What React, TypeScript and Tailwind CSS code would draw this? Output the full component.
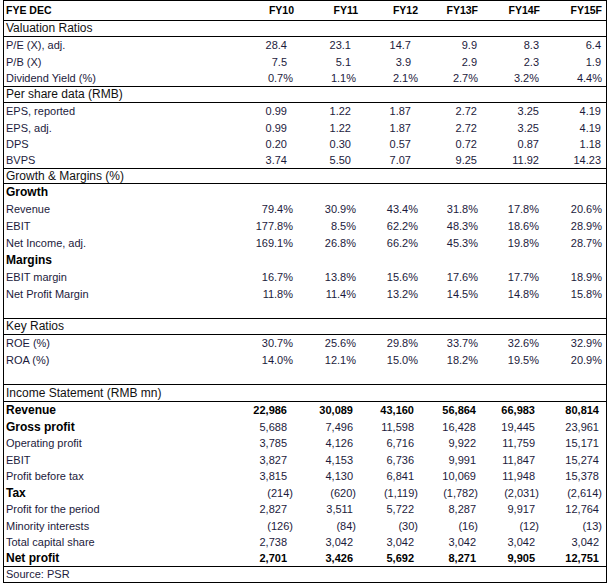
type Kind = 'head' | 'section' | 'sub' | 'row' | 'blank' | 'source';
type Fmt = 'dec' | 'pct' | 'num';

type Row = {
  label: string;
  kind: Kind;
  h: string;
  line?: boolean;
  vals?: string[];
  fmt?: Fmt;
  boldLabel?: boolean;
  boldVals?: boolean;
};

const years = ['FY10', 'FY11', 'FY12', 'FY13F', 'FY14F', 'FY15F'];

// right padding per column so numbers line up like the excel accounting format
const padDec = ['pr-[7px]', 'pr-[7px]', 'pr-[7px]', 'pr-[1px]', 'pr-[1px]', 'pr-[1px]'];
const padPct = ['pr-[1px]', 'pr-[2px]', 'pr-0', 'pr-0', 'pr-[1px]', 'pr-0'];
const padNum = ['pr-[7px]', 'pr-[5px]', 'pr-[4px]', 'pr-[2px]', 'pr-[5px]', 'pr-[3px]'];

const rows: Row[] = [
  { label: 'FYE DEC', kind: 'head', h: 'h-[20px]', line: true },
  { label: 'Valuation Ratios', kind: 'section', h: 'h-[16px]', line: true },
  { label: 'P/E (X), adj.', kind: 'row', h: 'h-[17px]', fmt: 'dec', vals: ['28.4', '23.1', '14.7', '9.9', '8.3', '6.4'] },
  { label: 'P/B (X)', kind: 'row', h: 'h-[17px]', fmt: 'dec', vals: ['7.5', '5.1', '3.9', '2.9', '2.3', '1.9'] },
  { label: 'Dividend Yield (%)', kind: 'row', h: 'h-[16px]', line: true, fmt: 'pct', vals: ['0.7%', '1.1%', '2.1%', '2.7%', '3.2%', '4.4%'] },
  { label: 'Per share data (RMB)', kind: 'section', h: 'h-[16px]', line: true },
  { label: 'EPS, reported', kind: 'row', h: 'h-[17px]', fmt: 'dec', vals: ['0.99', '1.22', '1.87', '2.72', '3.25', '4.19'] },
  { label: 'EPS, adj.', kind: 'row', h: 'h-[16px]', fmt: 'dec', vals: ['0.99', '1.22', '1.87', '2.72', '3.25', '4.19'] },
  { label: 'DPS', kind: 'row', h: 'h-[17px]', fmt: 'dec', vals: ['0.20', '0.30', '0.57', '0.72', '0.87', '1.18'] },
  { label: 'BVPS', kind: 'row', h: 'h-[16px]', line: true, fmt: 'dec', vals: ['3.74', '5.50', '7.07', '9.25', '11.92', '14.23'] },
  { label: 'Growth & Margins (%)', kind: 'section', h: 'h-[15px]', line: true },
  { label: 'Growth', kind: 'sub', h: 'h-[17px]' },
  { label: 'Revenue', kind: 'row', h: 'h-[17px]', fmt: 'pct', vals: ['79.4%', '30.9%', '43.4%', '31.8%', '17.8%', '20.6%'] },
  { label: 'EBIT', kind: 'row', h: 'h-[17px]', fmt: 'pct', vals: ['177.8%', '8.5%', '62.2%', '48.3%', '18.6%', '28.9%'] },
  { label: 'Net Income, adj.', kind: 'row', h: 'h-[17px]', fmt: 'pct', vals: ['169.1%', '26.8%', '66.2%', '45.3%', '19.8%', '28.7%'] },
  { label: 'Margins', kind: 'sub', h: 'h-[17px]' },
  { label: 'EBIT margin', kind: 'row', h: 'h-[17px]', fmt: 'pct', vals: ['16.7%', '13.8%', '15.6%', '17.6%', '17.7%', '18.9%'] },
  { label: 'Net Profit Margin', kind: 'row', h: 'h-[17px]', fmt: 'pct', vals: ['11.8%', '11.4%', '13.2%', '14.5%', '14.8%', '15.8%'] },
  { label: '', kind: 'blank', h: 'h-[16px]', line: true },
  { label: 'Key Ratios', kind: 'section', h: 'h-[16px]', line: true },
  { label: 'ROE (%)', kind: 'row', h: 'h-[17px]', fmt: 'pct', vals: ['30.7%', '25.6%', '29.8%', '33.7%', '32.6%', '32.9%'] },
  { label: 'ROA (%)', kind: 'row', h: 'h-[17px]', fmt: 'pct', vals: ['14.0%', '12.1%', '15.0%', '18.2%', '19.5%', '20.9%'] },
  { label: '', kind: 'blank', h: 'h-[16px]', line: true },
  { label: 'Income Statement (RMB mn)', kind: 'section', h: 'h-[17px]', line: true },
  { label: 'Revenue', kind: 'row', h: 'h-[17px]', fmt: 'num', boldLabel: true, boldVals: true, vals: ['22,986', '30,089', '43,160', '56,864', '66,983', '80,814'] },
  { label: 'Gross profit', kind: 'row', h: 'h-[16px]', fmt: 'num', boldLabel: true, vals: ['5,688', '7,496', '11,598', '16,428', '19,445', '23,961'] },
  { label: 'Operating profit', kind: 'row', h: 'h-[17px]', fmt: 'num', vals: ['3,785', '4,126', '6,716', '9,922', '11,759', '15,171'] },
  { label: 'EBIT', kind: 'row', h: 'h-[16px]', fmt: 'num', vals: ['3,827', '4,153', '6,736', '9,991', '11,847', '15,274'] },
  { label: 'Profit before tax', kind: 'row', h: 'h-[17px]', fmt: 'num', vals: ['3,815', '4,130', '6,841', '10,069', '11,948', '15,378'] },
  { label: 'Tax', kind: 'row', h: 'h-[16px]', fmt: 'num', boldLabel: true, vals: ['(214)', '(620)', '(1,119)', '(1,782)', '(2,031)', '(2,614)'] },
  { label: 'Profit for the period', kind: 'row', h: 'h-[17px]', fmt: 'num', vals: ['2,827', '3,511', '5,722', '8,287', '9,917', '12,764'] },
  { label: 'Minority interests', kind: 'row', h: 'h-[16px]', fmt: 'num', vals: ['(126)', '(84)', '(30)', '(16)', '(12)', '(13)'] },
  { label: 'Total capital share', kind: 'row', h: 'h-[17px]', fmt: 'num', vals: ['2,738', '3,042', '3,042', '3,042', '3,042', '3,042'] },
  { label: 'Net profit', kind: 'row', h: 'h-[16px]', line: true, fmt: 'num', boldLabel: true, boldVals: true, vals: ['2,701', '3,426', '5,692', '8,271', '9,905', '12,751'] },
  { label: 'Source: PSR', kind: 'source', h: 'h-[15px]' },
];

const grid = 'grid grid-cols-[226px_64px_64px_60px_60px_62px_62px] pr-[4px]';

function padFor(fmt: Fmt | undefined, v: string, i: number) {
  if (fmt === 'pct' || v.startsWith('(')) return padPct[i];
  if (fmt === 'dec') return padDec[i];
  return padNum[i];
}

function labelClass(r: Row) {
  if (r.kind === 'head') return 'text-[10.5px] font-bold text-black';
  if (r.kind === 'section') return 'text-[12px] text-[#111]';
  if (r.kind === 'sub') return 'text-[12px] font-bold text-black';
  if (r.boldLabel) return 'text-[12px] font-bold text-black';
  return 'text-[11px] text-[#1c1a3c]';
}

export default function App() {
  return (
    <div className="min-h-screen bg-white font-['Liberation_Sans',Arial,sans-serif]">
      <div className="ml-[3px] w-[604px] border border-black leading-[13px]">
        {rows.map((r, idx) => (
          <div key={idx} className={`${grid} ${r.h} ${r.line ? 'border-b border-black' : ''}`}>
            <div className={`flex items-center pl-[2px] whitespace-nowrap ${labelClass(r)}`}>{r.label}</div>
            {r.kind === 'head' &&
              years.map((y) => (
                <div key={y} className="flex items-center justify-end text-[10.5px] font-bold text-black">
                  {y}
                </div>
              ))}
            {r.vals &&
              r.vals.map((v, i) => (
                <div
                  key={i}
                  className={`flex items-center justify-end ${padFor(r.fmt, v, i)} ${
                    r.boldVals ? 'text-[11px] font-bold text-black' : 'text-[11px] text-[#1c1a3c]'
                  }`}
                >
                  {v}
                </div>
              ))}
          </div>
        ))}
      </div>
    </div>
  );
}
